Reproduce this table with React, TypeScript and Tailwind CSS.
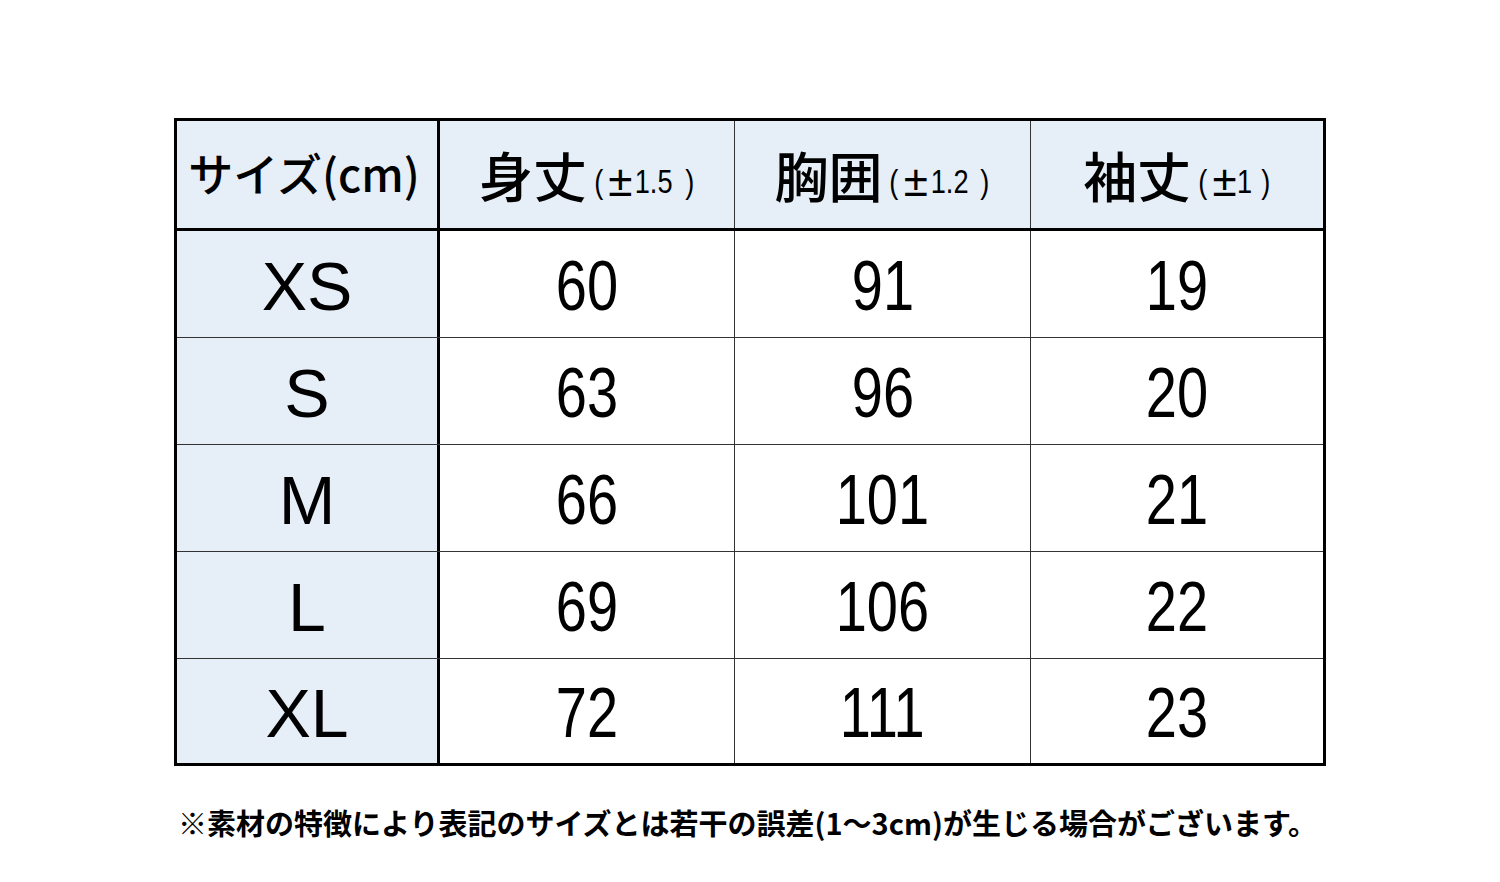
// Size chart table
const jp = { fontFamily: '"Noto Sans CJK JP", "Noto Sans", sans-serif' }

const rows = [
  { size: 'XS', length: 60, chest: 91, sleeve: 19 },
  { size: 'S', length: 63, chest: 96, sleeve: 20 },
  { size: 'M', length: 66, chest: 101, sleeve: 21 },
  { size: 'L', length: 69, chest: 106, sleeve: 22 },
  { size: 'XL', length: 72, chest: 111, sleeve: 23 },
]

function Tol({ value }: { value: string }) {
  return (
    <span className="font-['Liberation_Sans',sans-serif] text-[34px] leading-none ml-[6px] mt-[12px] flex items-center">
      <span className="inline-block scale-x-[0.8]">(</span>
      <span className="inline-block text-[44px] ml-[4px] mr-[2px] font-light">±</span>
      <span className="inline-block scale-x-[0.8] -mx-[4px]">{value}</span>
      <span className="inline-block scale-x-[0.8] ml-[10px]">)</span>
    </span>
  )
}

function Num({ v }: { v: number }) {
  return <span className="inline-block scale-x-[0.8] font-['Liberation_Sans',sans-serif]">{v}</span>
}

export default function App() {
  return (
    <div className="w-[1500px] h-[882px] bg-white text-black">
      <div className="pt-[118px] pl-[174px]">
        <div className="w-[1152px] border-[3px] border-black">
          {/* header */}
          <div className="flex h-[110px] border-b-[3px] border-black bg-[#e6eef8]">
            <div
              className="w-[263px] border-r-[3px] border-black flex items-center justify-center text-[45px] font-medium leading-none pb-[4px] pr-[6px]"
              style={jp}
            >
              サイズ(cm)
            </div>
            <div className="w-[295px] border-r border-[#333] flex items-center justify-center" style={jp}>
              <span className="text-[54px] font-medium leading-none">身丈</span>
              <Tol value="1.5" />
            </div>
            <div className="w-[296px] border-r border-[#333] flex items-center justify-center" style={jp}>
              <span className="text-[54px] font-medium leading-none">胸囲</span>
              <Tol value="1.2" />
            </div>
            <div className="w-[292px] flex items-center justify-center" style={jp}>
              <span className="text-[54px] font-medium leading-none">袖丈</span>
              <Tol value="1" />
            </div>
          </div>

          {/* body */}
          {rows.map((r, i) => (
            <div
              key={r.size}
              className={i < rows.length - 1 ? 'flex h-[107px] border-b border-[#333]' : 'flex h-[104px]'}
            >
              <div className="w-[263px] border-r-[3px] border-black bg-[#e6eef8] flex items-center justify-center font-['Liberation_Sans',sans-serif] text-[68px] leading-none pt-[4px]">
                {r.size}
              </div>
              <div className="w-[295px] border-r border-[#333] flex items-center justify-center text-[70px] leading-none pt-[4px]">
                <Num v={r.length} />
              </div>
              <div className="w-[296px] border-r border-[#333] flex items-center justify-center text-[70px] leading-none pt-[4px]">
                <Num v={r.chest} />
              </div>
              <div className="w-[292px] flex items-center justify-center text-[70px] leading-none pt-[4px]">
                <Num v={r.sleeve} />
              </div>
            </div>
          ))}
        </div>

        <p className="mt-[42px] ml-[4px] text-[29px] font-bold leading-none whitespace-nowrap" style={jp}>
          ※素材の特徴により表記のサイズとは若干の誤差(1～3cm)が生じる場合がございます。
        </p>
      </div>
    </div>
  )
}
